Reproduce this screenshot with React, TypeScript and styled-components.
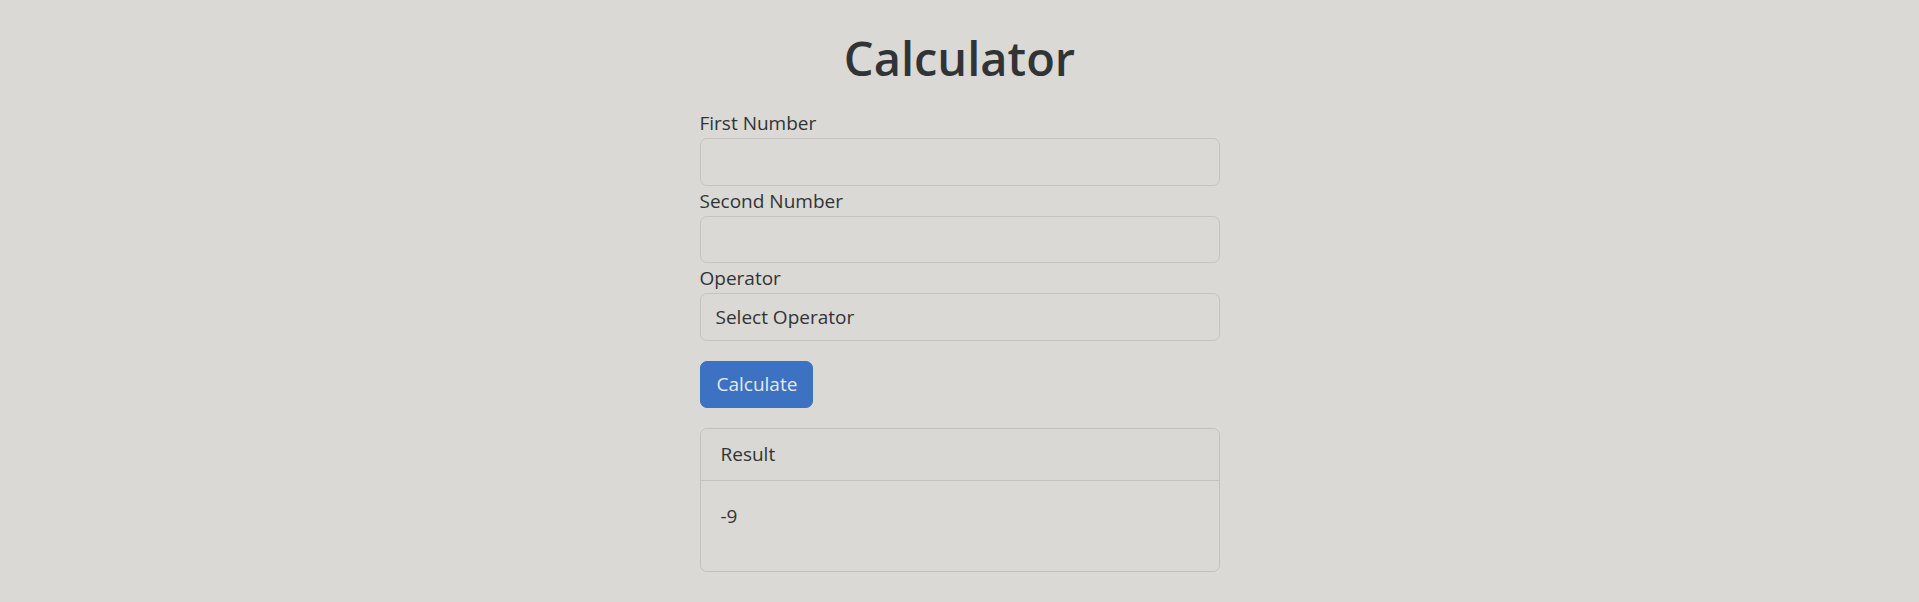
import React, { useState } from "react";
import styled, { createGlobalStyle } from "styled-components";

const GlobalStyle = createGlobalStyle`
  html, body {
    margin: 0;
    padding: 0;
    background: #dad9d5;
  }
  body {
    font-family: "Open Sans", "Noto Sans", "Liberation Sans", sans-serif;
    color: #303336;
  }
  * { box-sizing: border-box; }
`;

const Page = styled.div`
  min-height: 602px;
  padding-top: 28px;
  background: #dad9d5;
`;

const Container = styled.main`
  width: 520px;
  margin: 0 auto;
  display: flex;
  flex-direction: column;
`;

const Title = styled.h1`
  margin: 0 0 20px;
  text-align: center;
  font-size: 47px;
  font-weight: 600;
  line-height: 60px;
  color: #313437;
`;

const Field = styled.div`
  display: flex;
  flex-direction: column;
`;

const Label = styled.label`
  font-size: 19px;
  line-height: 30px;
  height: 30px;
  color: #313437;
`;

const Control = styled.input`
  height: 47.5px;
  width: 100%;
  margin: 0;
  padding: 0 15px;
  border: 1px solid #c5c4c0;
  border-radius: 7px;
  background: #dad9d5;
  font-family: inherit;
  font-size: 19px;
  color: #313437;
  outline: none;
`;

const Select = styled.select`
  height: 47.5px;
  width: 100%;
  margin: 0;
  padding: 0 15px;
  border: 1px solid #c5c4c0;
  border-radius: 7px;
  background: #dad9d5;
  font-family: inherit;
  font-size: 19px;
  color: #313437;
  appearance: none;
  -webkit-appearance: none;
  outline: none;
`;

const ButtonRow = styled.div`
  margin-top: 20px;
  display: flex;
`;

const Button = styled.button`
  height: 47.5px;
  padding: 0 15px 0 16px;
  border: 1px solid #3d71c1;
  border-radius: 7px;
  background: #3d71c1;
  color: #e4e9f1;
  font-family: inherit;
  font-size: 19px;
  cursor: pointer;
`;

const Card = styled.section`
  margin-top: 20px;
  border: 1px solid #c2c1bd;
  border-radius: 7px;
  overflow: hidden;
`;

const CardHeader = styled.div`
  padding: 10px 20px 11px;
  line-height: 30px;
  font-size: 19px;
  background: #d9d8d4;
  border-bottom: 1px solid #c2c1bd;
  color: #313437;
`;

const CardBody = styled.div`
  padding: 20px;
`;

const ResultText = styled.p`
  margin: 0 0 20px;
  line-height: 30px;
  font-size: 19px;
  color: #313437;
`;

export default function App() {
  const [a, setA] = useState("");
  const [b, setB] = useState("");
  const [op, setOp] = useState("");
  const [result] = useState("-9");

  return (
    <>
      <GlobalStyle />
      <Page>
        <Container>
          <Title>Calculator</Title>
          <Field>
            <Label htmlFor="first">First Number</Label>
            <Control id="first" type="number" value={a} onChange={(e) => setA(e.target.value)} />
          </Field>
          <Field>
            <Label htmlFor="second">Second Number</Label>
            <Control id="second" type="number" value={b} onChange={(e) => setB(e.target.value)} />
          </Field>
          <Field>
            <Label htmlFor="op">Operator</Label>
            <Select id="op" value={op} onChange={(e) => setOp(e.target.value)}>
              <option value="">Select Operator</option>
              <option value="+">+</option>
              <option value="-">-</option>
              <option value="*">*</option>
              <option value="/">/</option>
            </Select>
          </Field>
          <ButtonRow>
            <Button type="button">Calculate</Button>
          </ButtonRow>
          <Card>
            <CardHeader>Result</CardHeader>
            <CardBody>
              <ResultText>{result}</ResultText>
            </CardBody>
          </Card>
        </Container>
      </Page>
    </>
  );
}
